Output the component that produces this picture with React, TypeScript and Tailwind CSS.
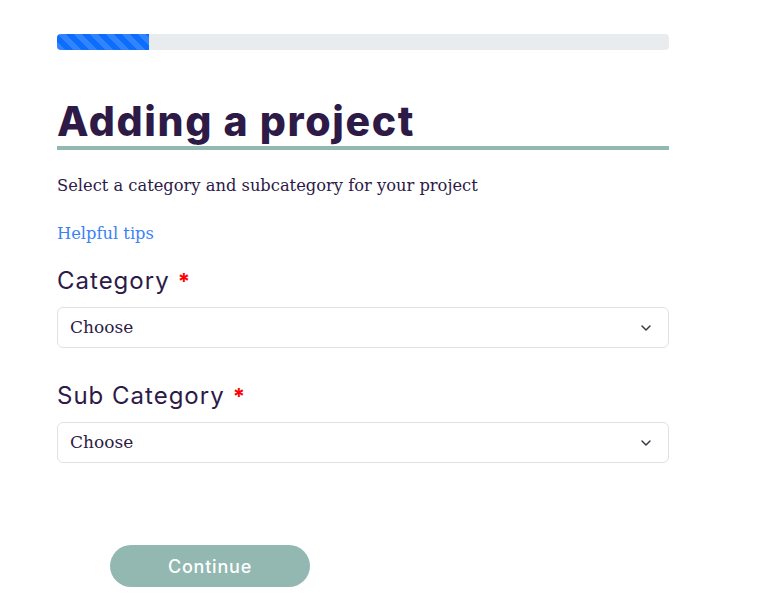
import React from "react";
import { ChevronDown } from "lucide-react";

const heading = { fontFamily: "Inter, 'Noto Sans', sans-serif" };

function SelectField({ label }: { label: string }) {
  return (
    <div className="flex flex-col">
      <label
        className="flex h-[34px] items-center gap-2 text-[24px] font-normal tracking-[1px] text-[#2d1a47]"
        style={heading}
      >
        {label}
        <span className="text-[22px] font-bold text-[#ff0000]">*</span>
      </label>
      <div className="mt-[9px] flex h-[41px] items-center justify-between rounded-md border border-[#dee2e6] bg-white pl-[12px] pr-[14px]">
        <span className="text-[17px] text-[#2d1a47]">Choose</span>
        <ChevronDown className="h-4 w-4 text-[#343a40]" strokeWidth={2.2} />
      </div>
    </div>
  );
}

export default function App() {
  return (
    <div
      className="min-h-[603px] w-[763px] bg-white"
      style={{ fontFamily: "'DejaVu Serif', 'Liberation Serif', serif" }}
    >
      <div className="ml-[57px] w-[612px] pt-[34px]">
        <div className="flex h-4 w-full overflow-hidden rounded bg-[#e9ecef]">
          <div
            className="h-full w-[92px] bg-[#0d6efd]"
            style={{
              backgroundImage:
                "linear-gradient(45deg, rgba(255,255,255,.15) 25%, transparent 25%, transparent 50%, rgba(255,255,255,.15) 50%, rgba(255,255,255,.15) 75%, transparent 75%, transparent)",
              backgroundSize: "16px 16px",
            }}
          />
        </div>

        <h1
          className="mt-[46px] border-b-4 border-[#93b7b1] text-[41px] font-extrabold leading-[50px] tracking-[1.6px] text-[#2d1a47]"
          style={heading}
        >
          Adding a project
        </h1>

        <p className="mt-[24px] text-[16.3px] leading-[24px] text-[#2d1a47]">
          Select a category and subcategory for your project
        </p>

        <a className="mt-[24px] block text-[16.3px] leading-[24px] text-[#3b82f6]" href="#">
          Helpful tips
        </a>

        <div className="mt-[18px] flex flex-col gap-[31px]">
          <SelectField label="Category" />
          <SelectField label="Sub Category" />
        </div>

        <div className="mt-[82px] pl-[53px]">
          <button
            className="h-[42px] w-[200px] rounded-full bg-[#93b7b1] text-[18px] font-medium tracking-[0.8px] text-white"
            style={heading}
          >
            Continue
          </button>
        </div>
      </div>
    </div>
  );
}
